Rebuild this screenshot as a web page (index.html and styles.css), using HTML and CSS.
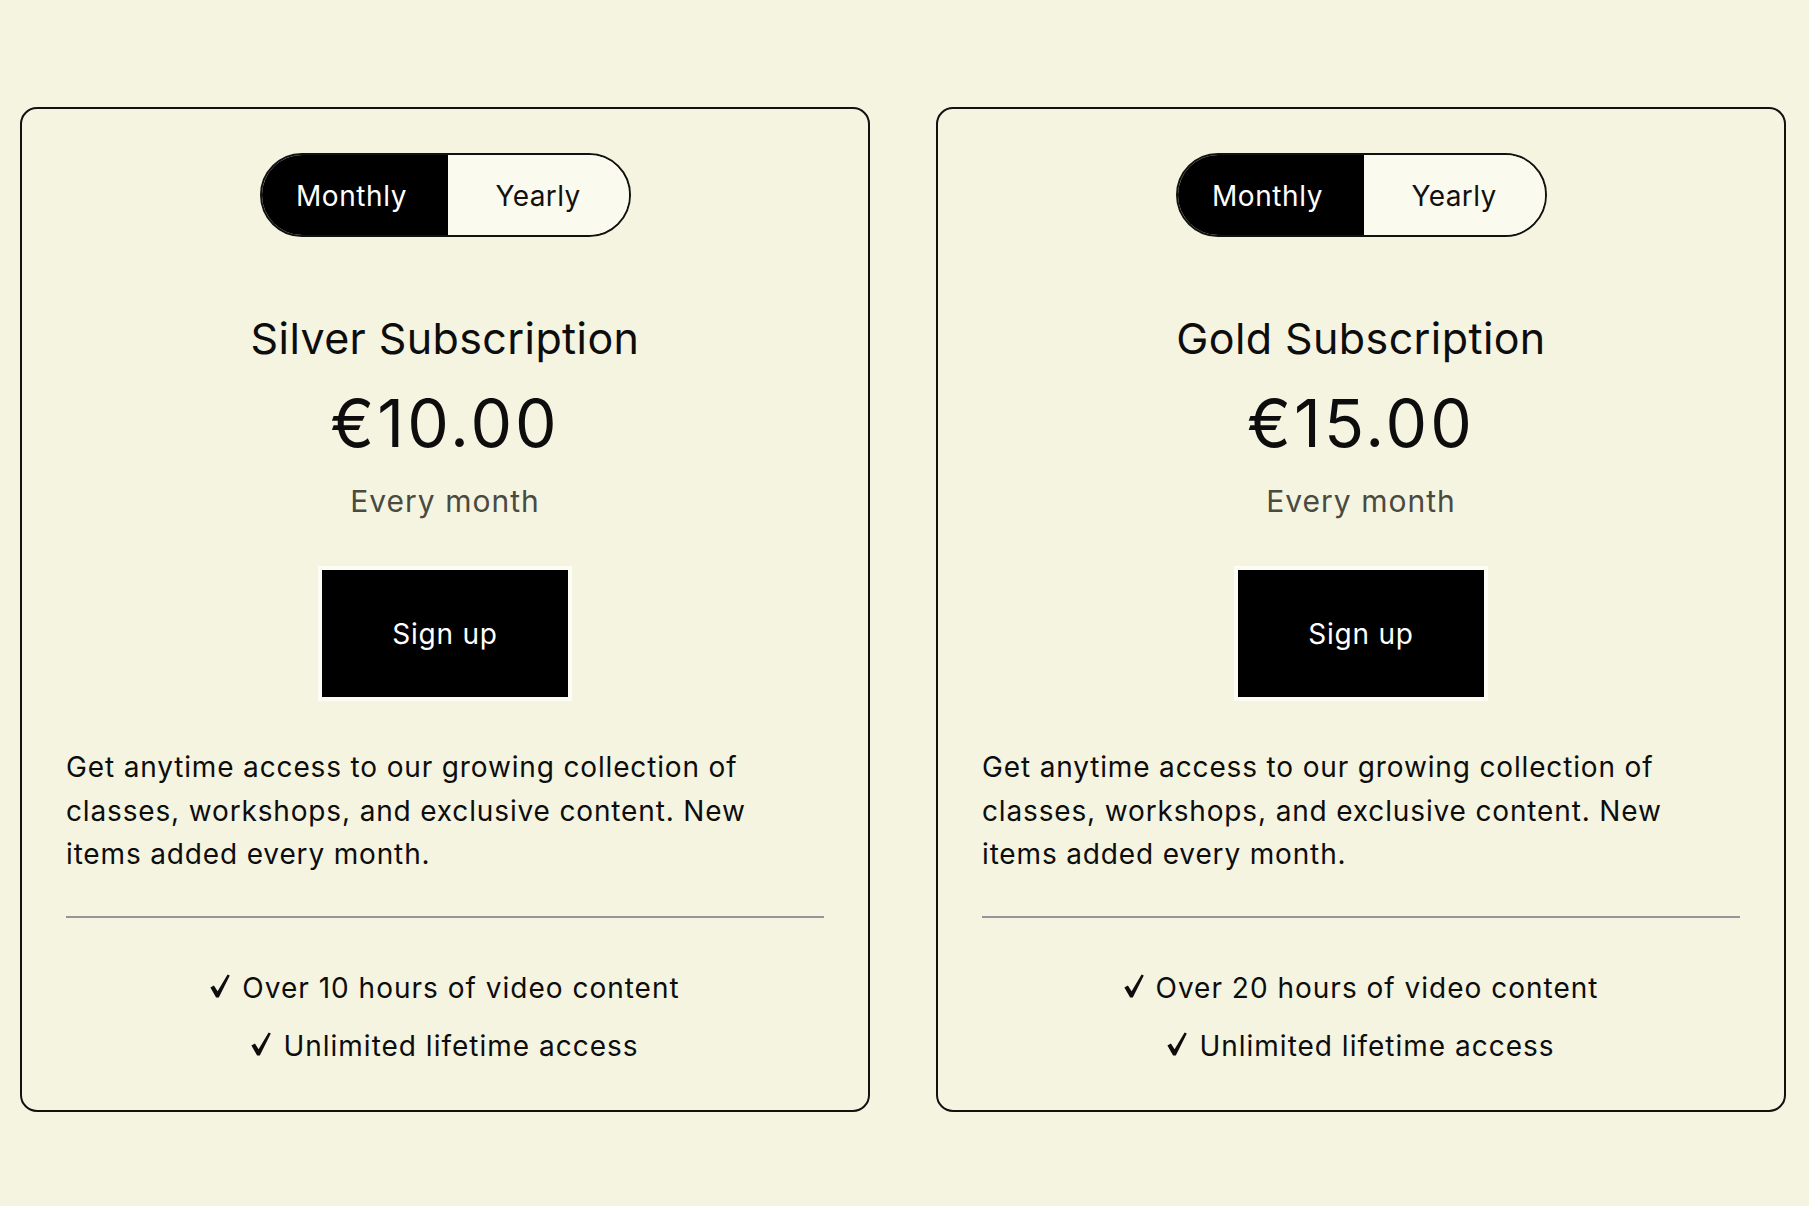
FILE: index.html
```html
<!DOCTYPE html>
<html lang="en">
<head>
<meta charset="utf-8">
<title>Subscriptions</title>
<link rel="stylesheet" href="styles.css">
</head>
<body>
<main class="plans">
  <section class="card">
    <div class="toggle">
      <span class="toggle-opt active">Monthly</span>
      <span class="toggle-opt">Yearly</span>
    </div>
    <h2 class="title">Silver Subscription</h2>
    <div class="price">€10.00</div>
    <div class="period">Every month</div>
    <div class="btn-wrap"><button class="signup">Sign up</button></div>
    <p class="desc">Get anytime access to our growing collection of classes, workshops, and exclusive content. New items added every month.</p>
    <hr class="divider">
    <ul class="features">
      <li><svg class="check" viewBox="0 0 20 24" aria-hidden="true"><path d="M0.4 13.6 L3.9 11.4 L7.6 17.2 L17.6 0.4 L19.8 1.6 L8.8 23.4 L6.1 23.4 Z"/></svg>Over 10 hours of video content</li>
      <li><svg class="check" viewBox="0 0 20 24" aria-hidden="true"><path d="M0.4 13.6 L3.9 11.4 L7.6 17.2 L17.6 0.4 L19.8 1.6 L8.8 23.4 L6.1 23.4 Z"/></svg>Unlimited lifetime access</li>
    </ul>
  </section>
  <section class="card">
    <div class="toggle">
      <span class="toggle-opt active">Monthly</span>
      <span class="toggle-opt">Yearly</span>
    </div>
    <h2 class="title">Gold Subscription</h2>
    <div class="price">€15.00</div>
    <div class="period">Every month</div>
    <div class="btn-wrap"><button class="signup">Sign up</button></div>
    <p class="desc">Get anytime access to our growing collection of classes, workshops, and exclusive content. New items added every month.</p>
    <hr class="divider">
    <ul class="features">
      <li><svg class="check" viewBox="0 0 20 24" aria-hidden="true"><path d="M0.4 13.6 L3.9 11.4 L7.6 17.2 L17.6 0.4 L19.8 1.6 L8.8 23.4 L6.1 23.4 Z"/></svg>Over 20 hours of video content</li>
      <li><svg class="check" viewBox="0 0 20 24" aria-hidden="true"><path d="M0.4 13.6 L3.9 11.4 L7.6 17.2 L17.6 0.4 L19.8 1.6 L8.8 23.4 L6.1 23.4 Z"/></svg>Unlimited lifetime access</li>
    </ul>
  </section>
</main>
</body>
</html>
```

FILE: styles.css
```css
* { box-sizing: border-box; }

html, body {
  margin: 0;
  padding: 0;
  background: #f5f4e1;
}

body {
  font-family: Inter, "Liberation Sans", "DejaVu Sans", sans-serif;
  color: #0d0d0d;
  width: 1809px;
  height: 1206px;
  overflow: hidden;
}

.plans {
  display: flex;
  gap: 66px;
  padding: 107px 0 0 20px;
}

.card {
  width: 850px;
  border: 2px solid #111;
  border-radius: 17px;
  padding: 44px 44px 44px;
  display: flex;
  flex-direction: column;
  align-items: center;
}

.toggle {
  display: flex;
  width: 371px;
  height: 84px;
  border: 2px solid #111;
  border-radius: 42px;
  overflow: hidden;
}

.toggle-opt {
  flex: 1 1 0;
  display: flex;
  align-items: center;
  justify-content: center;
  font-size: 28px;
  letter-spacing: 0.4px;
  padding-top: 2px;
  background: #fbfaee;
  color: #111;
}

.toggle-opt.active {
  flex: 0 0 186px;
  background: #000;
  color: #fff;
  letter-spacing: 0.6px;
  padding-right: 6px;
}

.title {
  margin: 76px 0 0;
  font-size: 43px;
  font-weight: 400;
  line-height: 50px;
  letter-spacing: 0.4px;
}

.price {
  margin-top: 22px;
  font-size: 66px;
  line-height: 77px;
  letter-spacing: 3px;
}

.period {
  margin-top: 21px;
  font-size: 30px;
  line-height: 36px;
  letter-spacing: 1px;
  color: #4a4a40;
}

.btn-wrap {
  margin-top: 47px;
  padding: 4px;
  background: #fdfdf6;
}

.signup {
  display: block;
  width: 246px;
  height: 127px;
  border: 0;
  background: #000;
  color: #fff;
  font-family: inherit;
  font-size: 28px;
  letter-spacing: 0.8px;
}

.desc {
  align-self: stretch;
  margin: 45px 0 0;
  font-size: 28px;
  line-height: 43.5px;
  letter-spacing: 0.85px;
}

.divider {
  align-self: stretch;
  margin: 39px 0 0;
  border: 0;
  height: 2px;
  background: #93979a;
}

.features {
  list-style: none;
  margin: 50px 0 0;
  padding: 0;
  display: flex;
  flex-direction: column;
  align-items: center;
  gap: 18px;
}

.features li {
  display: flex;
  align-items: baseline;
  font-size: 28px;
  line-height: 40px;
  letter-spacing: 1px;
}

.check {
  width: 20px;
  height: 24px;
  margin-right: 12px;
  fill: #0d0d0d;
  align-self: center;
  position: relative;
  top: -2px;
}
```
